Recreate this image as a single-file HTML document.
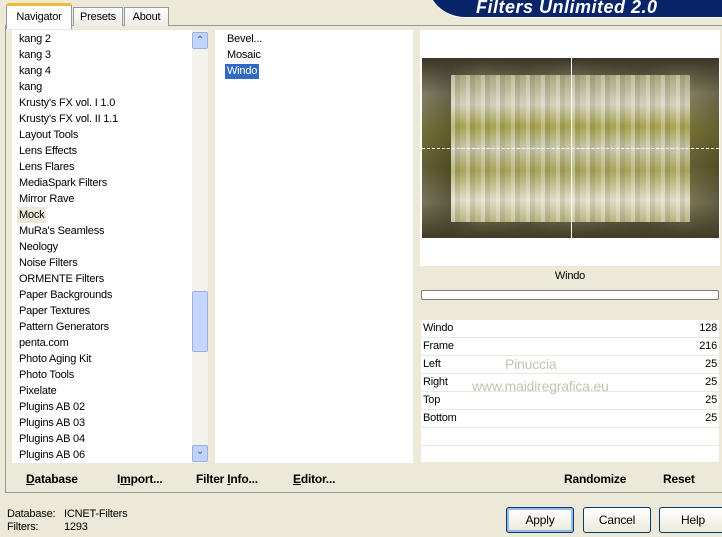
<!DOCTYPE html><html><head><style>
body{margin:0;width:722px;height:537px;background:#ece9d8;font-family:"Liberation Sans",sans-serif;font-size:11px;color:#000;position:relative;overflow:hidden;letter-spacing:-0.2px}
.a{position:absolute}
.li{position:absolute;left:19px;height:16px;line-height:17px;white-space:nowrap}
.btn{position:absolute;top:507px;height:24px;border:1px solid #003c74;border-radius:3px;background:linear-gradient(#fff,#ece9d8);text-align:center;line-height:24px;font-size:12px}
.row{position:absolute;left:421px;width:298px;height:17px;background:#fff;border-bottom:1px solid #ece9d8;line-height:17px}
.row span{position:absolute;right:2px}
.row b{font-weight:normal;position:absolute;left:2px}
.bb{position:absolute;top:472px;font-weight:bold;font-size:12px}
</style></head><body>
<div class="a" style="left:5px;top:25px;width:717px;height:466px;border:1px solid #919b9c;border-right:none;background:#ece9d8"></div>
<div class="a" style="left:6px;top:3px;width:64px;height:23px;background:#fff;border:1px solid #919b9c;border-bottom:none;border-top:3px solid #f4b834;border-radius:3px 3px 0 0;text-align:center;line-height:22px">Navigator</div>
<div class="a" style="left:73px;top:7px;width:48px;height:18px;background:linear-gradient(#fff,#ecebe5);border:1px solid #919b9c;border-bottom:none;text-align:center;line-height:19px">Presets</div>
<div class="a" style="left:124px;top:7px;width:43px;height:18px;background:linear-gradient(#fff,#ecebe5);border:1px solid #919b9c;border-bottom:none;text-align:center;line-height:19px">About</div>
<div class="a" style="left:425px;top:-30px;width:340px;height:46px;background:#0a246a;border-radius:0 0 0 40px;border:1px solid #fff"></div>
<div class="a" style="left:476px;top:-3px;color:#fff;font-weight:bold;font-style:italic;font-size:18px;letter-spacing:0.5px">Filters Unlimited 2.0</div>
<div class="a" style="left:12px;top:30px;width:196px;height:433px;background:#fff"></div>
<div class="a" style="left:192px;top:30px;width:16px;height:433px;background:#f3f1ec"></div>
<div class="a" style="left:192px;top:32px;width:14px;height:15px;background:#c1d3fb;border:1px solid #9bb0e6;border-radius:2px;text-align:center;color:#4d6185;font-size:10px;line-height:15px">&#8963;</div>
<div class="a" style="left:192px;top:445px;width:14px;height:15px;background:#c1d3fb;border:1px solid #9bb0e6;border-radius:2px;text-align:center;color:#4d6185;font-size:10px;line-height:12px">&#8964;</div>
<div class="a" style="left:192px;top:291px;width:14px;height:59px;background:#c6d5fb;border:1px solid #9bb0e6;border-radius:2px"></div>
<div class="li" style="top:31px">kang 2</div><div class="li" style="top:47px">kang 3</div><div class="li" style="top:63px">kang 4</div><div class="li" style="top:79px">kang</div>
<div class="li" style="top:95px">Krusty's FX vol. I 1.0</div><div class="li" style="top:111px">Krusty's FX vol. II 1.1</div><div class="li" style="top:127px">Layout Tools</div><div class="li" style="top:143px">Lens Effects</div><div class="li" style="top:159px">Lens Flares</div><div class="li" style="top:175px">MediaSpark Filters</div><div class="li" style="top:191px">Mirror Rave</div><div class="li" style="top:207px;background:#ece9d8;padding:0 2px;left:17px">Mock</div><div class="li" style="top:223px">MuRa's Seamless</div><div class="li" style="top:239px">Neology</div><div class="li" style="top:255px">Noise Filters</div><div class="li" style="top:271px">ORMENTE Filters</div><div class="li" style="top:287px">Paper Backgrounds</div><div class="li" style="top:303px">Paper Textures</div><div class="li" style="top:319px">Pattern Generators</div><div class="li" style="top:335px">penta.com</div><div class="li" style="top:351px">Photo Aging Kit</div><div class="li" style="top:367px">Photo Tools</div><div class="li" style="top:383px">Pixelate</div><div class="li" style="top:399px">Plugins AB 02</div><div class="li" style="top:415px">Plugins AB 03</div><div class="li" style="top:431px">Plugins AB 04</div><div class="li" style="top:447px">Plugins AB 06</div>
<div class="a" style="left:215px;top:30px;width:198px;height:433px;background:#fff"></div>
<div class="li" style="left:227px;top:31px">Bevel...</div><div class="li" style="left:227px;top:47px">Mosaic</div>
<div class="li" style="left:225px;top:64px;background:#316ac5;color:#fff;padding:0 2px;height:15px;line-height:15px">Windo</div>
<div class="a" style="left:420px;top:30px;width:300px;height:236px;background:#fff"></div>
<div class="a" style="left:422px;top:58px;width:297px;height:180px;background:linear-gradient(90deg,#6e6a55,#3d3a2c 10%,#8a8560 20%,#5e5940 35%,#8e8a6c 50%,#6a6440 62%,#4a452d 75%,#7a7555 88%,#45412e)"></div>
<div class="a" style="left:422px;top:58px;width:297px;height:180px;background:linear-gradient(#3a3628,rgba(160,155,120,.4) 20%,rgba(120,115,40,.6) 40%,rgba(90,85,30,.6) 60%,rgba(140,135,100,.4) 80%,#3f3b25)"></div>
<div class="a" style="left:451px;top:75px;width:239px;height:147px;background:linear-gradient(#aaa780,#d4d1bb 20%,#a8a350 35%,#c9c6ac 50%,#a9a45a 65%,#e0ddc8 85%,#b8b480)"></div>
<div class="a" style="left:451px;top:75px;width:239px;height:147px;background:repeating-linear-gradient(90deg,rgba(255,255,255,.25) 0 4px,rgba(0,0,0,.08) 4px 9px,rgba(255,255,255,0) 9px 15px)"></div>
<div class="a" style="left:571px;top:58px;width:1px;height:180px;background:#fff"></div>
<div class="a" style="left:422px;top:148px;width:297px;height:0;border-top:1px dashed #fff"></div>
<div class="a" style="left:420px;top:266px;width:300px;height:20px;text-align:center;line-height:20px">Windo</div>
<div class="a" style="left:421px;top:290px;width:296px;height:8px;background:#fff;border:1px solid #7a7a7a;border-radius:2px"></div>
<div class="row" style="top:320px"><b>Windo</b><span>128</span></div>
<div class="row" style="top:338px"><b>Frame</b><span>216</span></div>
<div class="row" style="top:356px"><b>Left</b><span>25</span></div>
<div class="row" style="top:374px"><b>Right</b><span>25</span></div>
<div class="row" style="top:392px"><b>Top</b><span>25</span></div>
<div class="row" style="top:410px"><b>Bottom</b><span>25</span></div>
<div class="row" style="top:428px"></div><div class="row" style="top:446px;height:16px"></div>
<div class="a" style="left:505px;top:356px;color:#c5c2b5;font-size:14px">Pinuccia</div>
<div class="a" style="left:472px;top:378px;color:#c5c2b5;font-size:14px">www.maidiregrafica.eu</div>
<div class="a" style="left:12px;top:463px;width:401px;height:27px;background:#ece9d8"></div>
<div class="bb" style="left:26px"><u>D</u>atabase</div><div class="bb" style="left:117px">I<u>m</u>port...</div><div class="bb" style="left:196px">Filter <u>I</u>nfo...</div><div class="bb" style="left:293px"><u>E</u>ditor...</div>
<div class="bb" style="left:564px">Randomize</div><div class="bb" style="left:663px">Reset</div>
<div class="a" style="left:7px;top:508px">Database:</div><div class="a" style="left:64px;top:508px">ICNET-Filters</div>
<div class="a" style="left:7px;top:521px">Filters:</div><div class="a" style="left:64px;top:521px">1293</div>
<div class="btn" style="left:506px;width:66px;border-color:#003c74;box-shadow:inset 0 0 0 2px #97b8ec">Apply</div>
<div class="btn" style="left:583px;width:66px">Cancel</div>
<div class="btn" style="left:659px;width:66px">Help</div>
</body></html>
